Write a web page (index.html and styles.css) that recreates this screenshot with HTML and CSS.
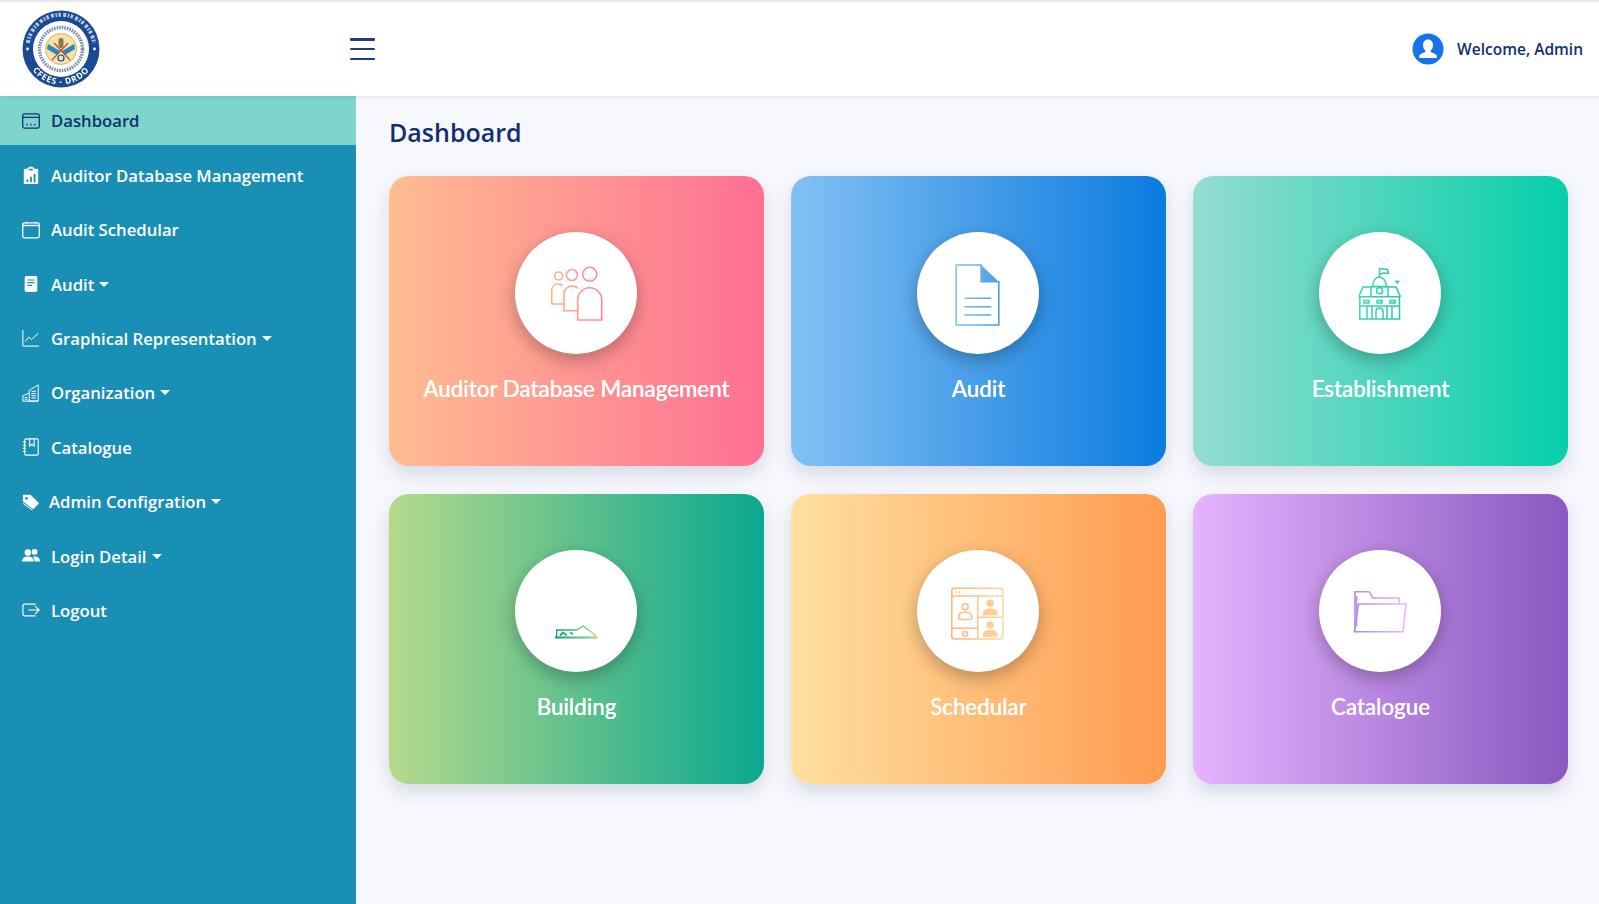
FILE: index.html
```html
<!DOCTYPE html>
<html lang="en">
<head>
    <meta charset="UTF-8">
    <meta name="viewport" content="width=device-width, initial-scale=1.0">
    <title>Dashboard</title>
    <link rel="stylesheet" href="styles.css">
</head>
<body>
    <header class="topbar">
        <svg class="logo" viewBox="0 0 78 78">
            <defs>
                <path id="logoBottomArc" d="M3.500 39a35.500 35.500 0 0 0 71 0"/>
            </defs>
            <circle cx="39" cy="39" r="38.500" fill="#1a4a94"/>
            <path d="M5.900 33A33.500 33.500 0 0 1 72.100 33" fill="none" stroke="#dfe8f5" stroke-width="4" stroke-dasharray="3 1.600 1.500 1.400 2.500 2.400" opacity=".8"/>
            <circle cx="5.500" cy="39" r="1.400" fill="#fff"/>
            <circle cx="72.500" cy="39" r="1.400" fill="#fff"/>
            <text class="logo-text"><textPath href="#logoBottomArc" startOffset="50%" text-anchor="middle">CFEES - DRDO</textPath></text>
            <circle cx="39" cy="39" r="28" fill="#fff"/>
            <circle cx="39" cy="39" r="21.500" fill="none" stroke="#5a6f96" stroke-width="3.500" stroke-dasharray="1.600 1" opacity=".8"/>
            <circle cx="39" cy="39" r="15.500" fill="#f4e2a6" stroke="#c9a64a" stroke-width=".8"/>
            <path d="M26 34l12 7-3 4-10-6zM52 34l-12 7 3 4 10-6z" fill="#2a86c6"/>
            <path d="M30 50l16-17M48 50L32 33" stroke="#c2453a" stroke-width="1.100"/>
            <rect x="36.500" y="28" width="5" height="10" rx="2" fill="#8a7a4a"/>
            <circle cx="39" cy="48" r="3" fill="none" stroke="#1a4a94" stroke-width="1.200"/>
        </svg>
        <button class="menu-toggle" aria-label="Menu"><span></span><span></span><span></span></button>
        <div class="user-box">
            <svg class="user-icon" viewBox="0 0 32 32">
                <circle cx="16" cy="16" r="15.500" fill="#1673ea"/>
                <path d="M16 6.500c-3.300 0-5 2.600-5 5.500 0 2.300 1 4.300 2.300 5.400v1.600c-2.400 1-5.800 2.200-6.300 4.200-.2.900.4 1.800 1.400 1.800h15.200c1 0 1.600-.9 1.400-1.800-.5-2-3.900-3.200-6.300-4.200v-1.600c1.300-1.100 2.300-3.100 2.300-5.400 0-2.900-1.700-5.500-5-5.500z" fill="#fff"/>
            </svg>
            <span class="user-name">Welcome, Admin</span>
        </div>
    </header>

    <div class="layout">
        <nav class="sidebar">
            <a class="nav-link active">
                <svg class="nav-icon" viewBox="0 0 20 20" fill="none" stroke="currentColor" stroke-width="1.400"><rect x=".8" y="2.200" width="18.400" height="15.600" rx="2"/><path d="M1 6h18"/><path d="M5 14h1.400M9.300 14h1.400M13.600 14H15" stroke-width="1.800"/></svg>
                Dashboard
            </a>
            <a class="nav-link">
                <svg class="nav-icon" viewBox="0 0 20 20"><path fill="currentColor" d="M3.500 3H6.500C7 1.300 8.200.5 10 .5s3 .8 3.500 2.500h3A1.500 1.500 0 0 1 18 4.500v14a1.500 1.500 0 0 1-1.500 1.500h-13A1.500 1.500 0 0 1 2 18.500v-14A1.500 1.500 0 0 1 3.500 3z"/><path fill="#1a8fb6" d="M8 3h4v2H8zM5 15h2v3H5zM9 12h2v6H9zM13 9h2v9h-2z"/></svg>
                Auditor Database Management
            </a>
            <a class="nav-link">
                <svg class="nav-icon" viewBox="0 0 20 20" fill="none" stroke="currentColor" stroke-width="1.400"><rect x=".8" y="2.200" width="18.400" height="16.600" rx="2"/><path d="M1 5h18" stroke-width="1.600"/><path d="M5 .8v2M15 .8v2"/></svg>
                Audit Schedular
            </a>
            <a class="nav-link">
                <svg class="nav-icon" viewBox="0 0 20 20"><rect x="3" y="1" width="14" height="18" rx="2" fill="currentColor"/><path d="M6 5.500h8M6 8.500h8M6 11.500h5" stroke="#1a8fb6" stroke-width="1.200"/></svg>
                <span class="caret">Audit</span>
            </a>
            <a class="nav-link">
                <svg class="nav-icon" viewBox="0 0 20 20" fill="none" stroke="currentColor" stroke-width="1.100"><path d="M1 1v18h18"/><path d="M3.500 14l4-5 3 2.500L18 5"/></svg>
                <span class="caret">Graphical Representation</span>
            </a>
            <a class="nav-link">
                <svg class="nav-icon" viewBox="0 0 20 20" fill="none" stroke="currentColor" stroke-width="1.100"><path d="M8 19V7l10-6v18zM1 19v-6l7-3M1 19h17"/><path d="M10.500 8h5M10.500 10.500h5M10.500 13h5M10.500 15.500h5M3 15h3M3 17h3" stroke-width="1.200"/></svg>
                <span class="caret">Organization</span>
            </a>
            <a class="nav-link">
                <svg class="nav-icon" viewBox="0 0 20 20" fill="none" stroke="currentColor" stroke-width="1.200"><rect x="3" y="1" width="15" height="18" rx="1.500"/><path d="M8.500 1v8l2.500-2 2.500 2V1M1 4.500h3.500M1 8h3.500M1 11.500h3.500M1 15h3.500"/></svg>
                Catalogue
            </a>
            <a class="nav-link nav-link-tight">
                <svg class="nav-icon" viewBox="0 0 20 20"><path fill="currentColor" d="M1 2h8.500l9.500 9.500-6.500 6.500L1 9.500z"/><path fill="none" stroke="currentColor" stroke-width="1.100" d="M1 11.500l10.500 7.500"/><circle cx="5" cy="6" r="1.500" fill="#1a8fb6"/></svg>
                <span class="caret">Admin Configration</span>
            </a>
            <a class="nav-link">
                <svg class="nav-icon" viewBox="0 0 20 20" fill="currentColor"><circle cx="6.500" cy="6" r="3.600"/><circle cx="14" cy="5.500" r="3.200"/><path d="M0 16c0-3.500 2.500-5.500 6.500-5.500s6.500 2 6.500 5.500zM14 16h6c0-3.500-2-5.500-5.500-5.500-1 0-1.800.2-2.400.5 1.200 1.200 1.900 3 1.900 5z"/></svg>
                <span class="caret">Login Detail</span>
            </a>
            <a class="nav-link">
                <svg class="nav-icon" viewBox="0 0 20 20" fill="none" stroke="currentColor" stroke-width="1.300"><path d="M15 3.500H3a2 2 0 0 0-2 2v9a2 2 0 0 0 2 2h12"/><path d="M7 10h12M14.500 5.500L19 10l-4.500 4.500"/></svg>
                Logout
            </a>
        </nav>

        <main class="content">
            <h1 class="page-title">Dashboard</h1>
            <div class="card-grid">
                <div class="card card-pink">
                    <div class="card-circle">
                        <svg class="card-icon" viewBox="0 0 70 70" fill="none" stroke="url(#gradPink)" stroke-width="1.600">
                            <defs><linearGradient id="gradPink" gradientUnits="userSpaceOnUse" x1="8" y1="0" x2="62" y2="0"><stop offset="0" stop-color="#ffb88c"/><stop offset="1" stop-color="#ff7f9c"/></linearGradient></defs>
                            <circle cx="17.700" cy="18" r="4"/>
                            <circle cx="31" cy="17" r="5.500"/>
                            <circle cx="48.700" cy="16.300" r="7"/>
                            <path d="M23 46H10.700V32.500C10.700 28.500 13.500 26 17 26c1.900 0 3.500.6 4.700 1.800"/>
                            <path d="M36.700 52.700H23V36c0-4.500 3.500-8 8-8 2.300 0 4.300.8 5.800 2.200"/>
                            <path d="M36.700 62H60.700V41.700c0-6.500-5.300-12-12-12s-12 5.500-12 12z"/>
                        </svg>
                    </div>
                    <div class="card-label">Auditor Database Management</div>
                </div>
                <div class="card card-blue">
                    <div class="card-circle">
                        <svg class="card-icon" viewBox="0 0 70 70" fill="none" stroke="url(#gradBlue)" stroke-width="1.600">
                            <defs><linearGradient id="gradBlue" gradientUnits="userSpaceOnUse" x1="13" y1="0" x2="56" y2="0"><stop offset="0" stop-color="#83c0f3"/><stop offset="1" stop-color="#4a9be8"/></linearGradient></defs>
                            <path d="M38.200 7H13.200v60h42.600V23.700H38.200z"/>
                            <path d="M38.200 7l17.600 16.700H38.200z" fill="url(#gradBlue)" stroke="none"/>
                            <path d="M21.500 40.300h26.700M21.500 48.700h26.700M21.500 57h26.700"/>
                        </svg>
                    </div>
                    <div class="card-label">Audit</div>
                </div>
                <div class="card card-teal">
                    <div class="card-circle">
                        <svg class="card-icon" viewBox="0 0 70 70" fill="none" stroke="url(#gradTeal)" stroke-width="1.500">
                            <defs><linearGradient id="gradTeal" gradientUnits="userSpaceOnUse" x1="13" y1="0" x2="56" y2="0"><stop offset="0" stop-color="#45d3b6"/><stop offset="1" stop-color="#20cda9"/></linearGradient></defs>
                            <path d="M34.500 19V10.500l8 1 1 4-5-.5-4 1.500"/>
                            <path d="M27.800 28c0-5 3-9 6.700-9s6.700 4 6.700 9M26 28.500h17"/>
                            <path d="M26 38.700v-10h17v10"/>
                            <circle cx="34.500" cy="32.700" r="3"/>
                            <path d="M13.800 38.700L18 29h8M55.500 38.700L51 29h-8M13.800 38.700h41.700M14.800 38.700V61h39.700V38.700M13.800 61h41.700"/>
                            <path d="M19 42.500h5v2.500h-5zM32 42.500h5v2.500h-5zM45 42.500h5v2.500h-5z"/>
                            <path d="M14.800 48h39.700M22 48v13M27 48v13M42 48v13M47 48v13"/>
                            <path d="M31 61v-7.500c0-2 1.500-3.500 3.500-3.500s3.500 1.500 3.500 3.500V61"/>
                            <path d="M52.200 26l-2-2.200c-.8-1.300 1-2 2-.8 1-1.200 2.800-.5 2 .8z" fill="url(#gradTeal)" stroke="none"/>
                        </svg>
                    </div>
                    <div class="card-label">Establishment</div>
                </div>
                <div class="card card-green">
                    <div class="card-circle">
                        <svg class="card-icon" viewBox="0 0 70 70" fill="none" stroke="url(#gradGreen)" stroke-width="1.300">
                            <defs><linearGradient id="gradGreen" gradientUnits="userSpaceOnUse" x1="14" y1="0" x2="56" y2="0"><stop offset="0" stop-color="#0a9c83"/><stop offset="1" stop-color="#a9d689"/></linearGradient></defs>
                            <path d="M15.700 61V54h20l6.600-4.300 5 4.300c3 2 6.700 4 9 8.300"/>
                            <path d="M14 61.500h42" stroke-width="1.800"/>
                            <path d="M19 59.500l3-3 4 3M29 56l3 2.500" stroke-width="2"/>
                        </svg>
                    </div>
                    <div class="card-label">Building</div>
                </div>
                <div class="card card-orange">
                    <div class="card-circle">
                        <svg class="card-icon" viewBox="0 0 70 70" fill="none" stroke="url(#gradOrange)" stroke-width="1.500">
                            <defs><linearGradient id="gradOrange" gradientUnits="userSpaceOnUse" x1="9" y1="0" x2="60" y2="0"><stop offset="0" stop-color="#ffb37a"/><stop offset="1" stop-color="#ffd7a0"/></linearGradient></defs>
                            <rect x="8.800" y="12.300" width="51" height="50.700" rx="2.500"/>
                            <path d="M8.800 20h51M34.800 20v43M34.800 41.300h25M8.800 52.300h26"/>
                            <path d="M12.500 16.200h1M16 16.200h1M19.500 16.200h1" stroke-width="1.800"/>
                            <circle cx="22.200" cy="30.700" r="3"/>
                            <path d="M15.500 42c0-4 3-6 6.700-6s6.700 2 6.700 6c0 1-.5 1.500-1.500 1.500h-10.400c-1 0-1.500-.5-1.500-1.500z"/>
                            <circle cx="47.200" cy="27.300" r="3" fill="url(#gradOrange)"/>
                            <path d="M40.500 38.500c0-4 3-5.500 6.700-5.500s6.700 1.500 6.700 5.500z" fill="url(#gradOrange)"/>
                            <circle cx="47.200" cy="49" r="3" fill="url(#gradOrange)"/>
                            <path d="M40.500 60c0-4 3-5.500 6.700-5.500s6.700 1.500 6.700 5.500z" fill="url(#gradOrange)"/>
                            <circle cx="22.200" cy="58" r="2.400"/>
                        </svg>
                    </div>
                    <div class="card-label">Schedular</div>
                </div>
                <div class="card card-purple">
                    <div class="card-circle">
                        <svg class="card-icon" viewBox="0 0 70 70" fill="none" stroke="url(#gradPurple)" stroke-width="1.600">
                            <defs><linearGradient id="gradPurple" gradientUnits="userSpaceOnUse" x1="9" y1="0" x2="61" y2="0"><stop offset="0" stop-color="#b58ae0"/><stop offset="1" stop-color="#e6b8ff"/></linearGradient></defs>
                            <path d="M10 55.700V15.700h14l4 6.300h26v6"/>
                            <path d="M13.500 28H61l-3 27.700H9.500z"/>
                            <path d="M11.500 20v30"/>
                        </svg>
                    </div>
                    <div class="card-label">Catalogue</div>
                </div>
            </div>
        </main>
    </div>
</body>
</html>
```

FILE: styles.css
```css
:root {
    --navy: #12306f;
    --sidebar-blue: #1a8fb6;
    --sidebar-active: #7dd5cb;
    --page-bg: #f6f8fd;
}

html, body {
    margin: 0;
    padding: 0;
    height: 100%;
    overflow: hidden;
    font-family: "Open Sans", sans-serif;
    background: var(--page-bg);
}

body {
    display: flex;
    flex-direction: column;
    border-top: 2px solid #e6e7ea;
    box-sizing: border-box;
}

/* top bar */
.topbar {
    height: 94px;
    flex: none;
    display: flex;
    align-items: center;
    padding: 0 16px 0 22px;
    background: #fff;
    box-shadow: 0 1px 4px rgba(60, 80, 140, 0.12);
    z-index: 1;
}

.logo {
    width: 78px;
    height: 78px;
    margin-right: 250px;
    overflow: visible;
    filter: blur(0.3px);
}

.logo-text {
    font-family: "Open Sans", sans-serif;
    font-size: 8.5px;
    font-weight: 700;
    letter-spacing: 0.8px;
    fill: #fff;
}

.menu-toggle {
    width: 25px;
    height: 22px;
    padding: 0;
    border: none;
    background: none;
    display: flex;
    flex-direction: column;
    justify-content: space-between;
}

.menu-toggle span {
    display: block;
    height: 2.5px;
    background: #1d3c78;
    border-radius: 1px;
}

.user-box {
    margin-left: auto;
    display: flex;
    align-items: center;
    gap: 13px;
}

.user-icon {
    width: 32px;
    height: 32px;
}

.user-name {
    font-size: 15.5px;
    font-weight: 600;
    color: var(--navy);
}

/* main layout */
.layout {
    flex: 1;
    display: flex;
    min-height: 0;
}

.sidebar {
    width: 356px;
    flex: none;
    display: flex;
    flex-direction: column;
    gap: 5.4px;
    background: var(--sidebar-blue);
}

.nav-link {
    height: 49px;
    display: flex;
    align-items: center;
    padding-left: 22px;
    font-size: 16.7px;
    font-weight: 600;
    color: #fff;
}

.nav-link.active {
    margin-bottom: 0.4px;
    background: var(--sidebar-active);
    color: var(--navy);
}

.nav-icon {
    width: 18px;
    height: 18px;
    flex: none;
    margin-right: 11px;
}

.nav-link-tight .nav-icon {
    margin-right: 9px;
}

.caret::after {
    content: "";
    display: inline-block;
    margin-left: 5px;
    vertical-align: 4px;
    border-top: 5px solid #fff;
    border-left: 5px solid transparent;
    border-right: 5px solid transparent;
}

.content {
    flex: 1;
    padding: 19px 31px 0 33px;
}

.page-title {
    margin: 0 0 27px;
    font-size: 25px;
    line-height: 34px;
    font-weight: 600;
    color: var(--navy);
}

.card-grid {
    display: grid;
    grid-template-columns: repeat(3, 375px);
    grid-auto-rows: 290px;
    gap: 28px 27px;
}

.card {
    display: flex;
    flex-direction: column;
    align-items: center;
    padding-top: 56px;
    box-sizing: border-box;
    border-radius: 20px;
    box-shadow: 0 8px 18px rgba(40, 50, 90, 0.15);
}

.card-pink { background: linear-gradient(90deg, #ffbd91, #ff6f93); }
.card-blue { background: linear-gradient(90deg, #83c0f3, #0a7be0); }
.card-teal { background: linear-gradient(90deg, #95dcd2, #05cfa9); }
.card-green { background: linear-gradient(90deg, #b5d98b, #0aa88f); }
.card-orange { background: linear-gradient(90deg, #ffe0a0, #ff9b50); }
.card-purple { background: linear-gradient(90deg, #e6b3ff, #8a58c0); }

.card-circle {
    width: 122px;
    height: 122px;
    margin-right: 1px;
    border-radius: 50%;
    background: #fff;
    display: flex;
    align-items: center;
    justify-content: center;
    box-shadow: 0 6px 18px rgba(0, 0, 0, 0.28);
}

.card-icon {
    width: 70px;
    height: 70px;
}

.card-label {
    margin-top: 23px;
    font-family: Lato, sans-serif;
    font-size: 22.3px;
    line-height: 24px;
    font-weight: 500;
    color: #fff;
    text-shadow: 0 0 0.6px #fff;
}
```
